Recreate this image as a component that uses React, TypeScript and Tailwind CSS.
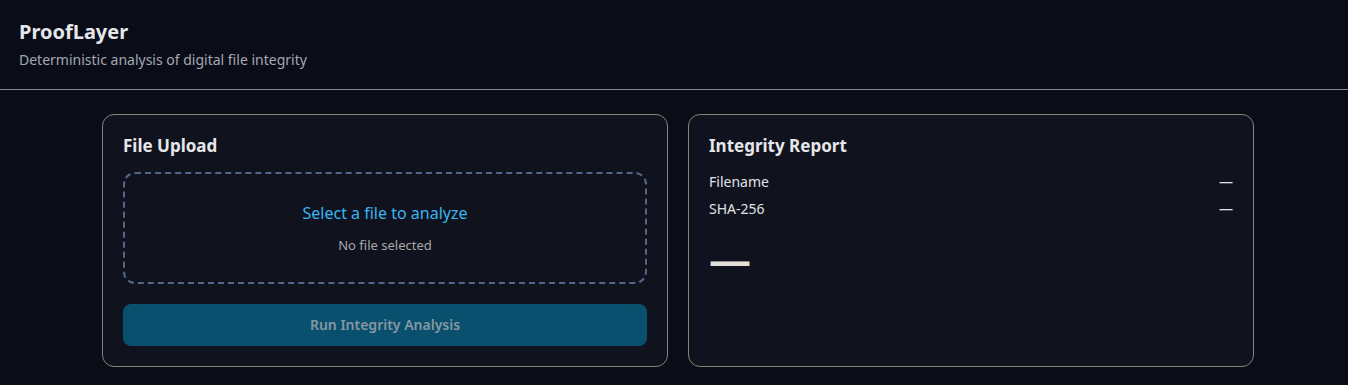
export default function App() {
  return (
    <div className="min-h-screen bg-[#0a0d18] text-[#e5e7eb]" style={{ fontFamily: '"Noto Sans", sans-serif' }}>
      <header className="border-b border-[#8a8a8a] pl-[19px] pr-5 pt-[18px] pb-[19px]">
        <h1 className="text-xl font-bold leading-7 text-[#e5e7eb]">ProofLayer</h1>
        <p className="mt-[4px] text-sm leading-5 text-[#a3a8b3]">Deterministic analysis of digital file integrity</p>
      </header>
      <main className="ml-[102px] w-[1152px] pt-6">
        <div className="grid grid-cols-2 gap-5">
          <section className="rounded-xl border border-[#8a8374] bg-[#10131e] px-5 pt-[17px] pb-5">
            <h2 className="text-[17px] font-bold leading-7 text-[#e5e7eb]">File Upload</h2>
            <div className="mt-3 flex h-[112px] flex-col items-center justify-center rounded-xl border-2 border-dashed border-[#53668a]">
              <div className="text-base leading-6 text-[#38b6f0]">Select a file to analyze</div>
              <div className="mt-[10px] text-[13px] leading-5 text-[#a8a8a8]">No file selected</div>
            </div>
            <button className="mt-5 flex h-[42px] w-full items-center justify-center rounded-lg bg-[#08506e] text-sm font-semibold text-[#8797a2]">
              Run Integrity Analysis
            </button>
          </section>
          <section className="rounded-xl border border-[#8a8374] bg-[#10131e] px-5 pt-[17px] pb-5">
            <h2 className="text-[17px] font-bold leading-7 text-[#e5e7eb]">Integrity Report</h2>
            <div className="mt-3 flex flex-col gap-[7px] text-sm leading-5 text-[#e0e2e6]">
              <div className="flex justify-between">
                <span>Filename</span>
                <span>—</span>
              </div>
              <div className="flex justify-between">
                <span>SHA-256</span>
                <span>—</span>
              </div>
            </div>
            <div className="mt-[12px] text-[42px] font-bold leading-[56px] text-[#e3e0dc]">—</div>
          </section>
        </div>
      </main>
    </div>
  );
}
